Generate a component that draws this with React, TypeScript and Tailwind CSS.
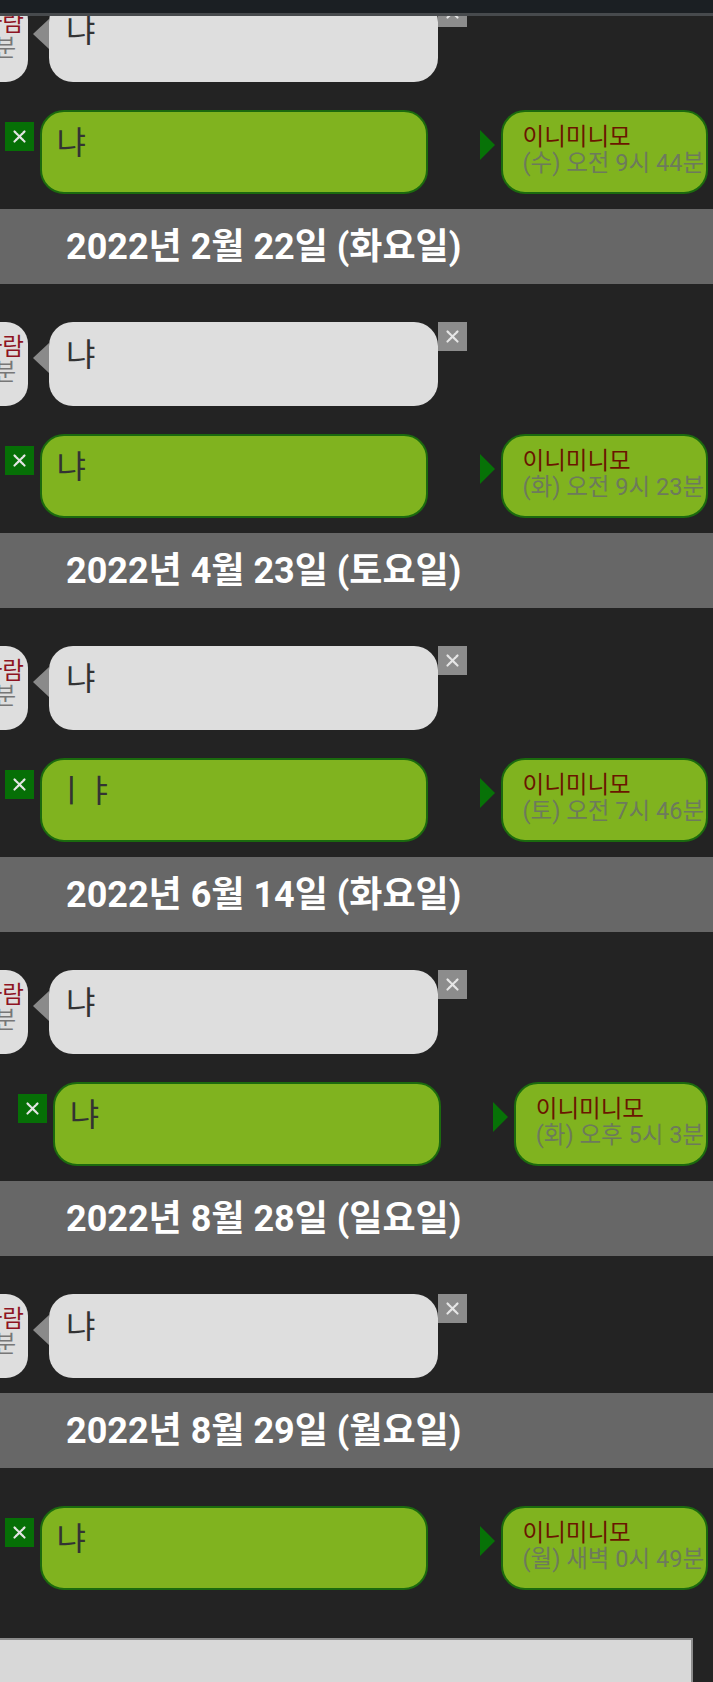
import React from "react"

type Item =
  | { kind: "recv" }
  | { kind: "sent"; text: string; time: string }
  | { kind: "date"; label: string }

const items: Item[] = [
  { kind: "recv" },
  { kind: "sent", text: "냐", time: "(수) 오전 9시 44분" },
  { kind: "date", label: "2022년 2월 22일 (화요일)" },
  { kind: "recv" },
  { kind: "sent", text: "냐", time: "(화) 오전 9시 23분" },
  { kind: "date", label: "2022년 4월 23일 (토요일)" },
  { kind: "recv" },
  { kind: "sent", text: "ㅣㅑ", time: "(토) 오전 7시 46분" },
  { kind: "date", label: "2022년 6월 14일 (화요일)" },
  { kind: "recv" },
  { kind: "sent", text: "냐", time: "(화) 오후 5시 3분" },
  { kind: "date", label: "2022년 8월 28일 (일요일)" },
  { kind: "recv" },
  { kind: "date", label: "2022년 8월 29일 (월요일)" },
  { kind: "sent", text: "냐", time: "(월) 새벽 0시 49분" },
]

function XIcon() {
  return (
    <svg width="15" height="15" viewBox="0 0 15 15">
      <path d="M2.5 2.5 L12.5 12.5 M12.5 2.5 L2.5 12.5" stroke="#e6e6e6" strokeWidth="2.2" strokeLinecap="round" strokeDasharray="1.6 1.1" />
    </svg>
  )
}

function Received() {
  return (
    <div className="w-[467px] flex justify-end items-start">
      {/* other person's name tag, cut off on the left */}
      <div className="shrink-0 h-[84px] rounded-r-[22px] bg-[#dedede] pt-[13px] pr-[4px] flex flex-col items-end text-[23.5px] leading-[25px] whitespace-nowrap">
        <div className="text-[#8e1422]">모르는사람</div>
        <div className="text-[#777777] mr-[8px]">(화) 오전 9시 23분</div>
      </div>
      <div className="shrink-0 ml-[5px] mt-[21px] w-0 h-0 border-y-[15px] border-y-transparent border-r-[16px] border-r-[#8a8a8a]" />
      <div className="shrink-0 w-[389px] h-[84px] rounded-[24px] bg-[#dedede] pl-[17px] pt-[13px] text-[32px] leading-[40px] text-[#333333]">
        냐
      </div>
      <div className="shrink-0 w-[29px] h-[29px] bg-[#8c8c8c] flex items-center justify-center">
        <XIcon />
      </div>
    </div>
  )
}

function Sent({ text, time }: { text: string; time: string }) {
  return (
    <div className="flex justify-end items-start pr-[5px]">
      <div className="shrink-0 mt-[12px] w-[29px] h-[29px] bg-[#066f06] flex items-center justify-center">
        <XIcon />
      </div>
      <div className="shrink-0 ml-[6px] w-[388px] h-[84px] rounded-[24px] bg-[#80b31f] border-2 border-[#1b6a0e] pl-[15px] pt-[11px] text-[32px] leading-[40px] text-[#333333]">
        {text}
      </div>
      <div className="shrink-0 ml-[52px] mt-[20px] w-0 h-0 border-y-[15px] border-y-transparent border-l-[15px] border-l-[#077207]" />
      <div className="shrink-0 ml-[6px] h-[84px] rounded-[24px] bg-[#80b31f] border-2 border-[#1b6a0e] pl-[20px] pr-[2px] pt-[12px] text-[23.5px] leading-[26px] whitespace-nowrap">
        <div className="text-[#6a1500]">이니미니모</div>
        <div className="text-[#6d7a5c]">{time}</div>
      </div>
    </div>
  )
}

export default function App() {
  return (
    <div
      className="relative w-[713px] h-[1682px] overflow-hidden bg-[#232323]"
      style={{ fontFamily: "Roboto, 'Noto Sans CJK KR', sans-serif" }}
    >
      {/* ===== TOP BAR ===== */}
      <div className="absolute top-0 left-0 right-0 z-10 h-[16px] bg-[#1b1f23] border-b-[3px] border-[#474a4d]" />

      {/* ===== MESSAGES ===== */}
      <div className="flex flex-col -mt-[2px]">
        {items.map((it, i) => {
          const prev = items[i - 1]
          let mt = ""
          if (i > 0) {
            if (prev.kind === "date") mt = "mt-[38px]"
            else if (it.kind === "date") mt = "mt-[15px]"
            else mt = "mt-[28px]"
          }
          if (it.kind === "date") {
            return (
              <div key={i} className={`${mt} h-[75px] bg-[#676767] flex items-center pl-[66px] text-[36px] font-bold text-white`}>
                {it.label}
              </div>
            )
          }
          if (it.kind === "recv") {
            return (
              <div key={i} className={mt}>
                <Received />
              </div>
            )
          }
          return (
            <div key={i} className={mt}>
              <Sent text={it.text} time={it.time} />
            </div>
          )
        })}
      </div>

      {/* ===== INPUT ===== */}
      <div className="mt-[48px] -ml-[2px] w-[695px] h-[70px] bg-[#d8d8d8] border-2 border-[#8c8c8c]" />
    </div>
  )
}
